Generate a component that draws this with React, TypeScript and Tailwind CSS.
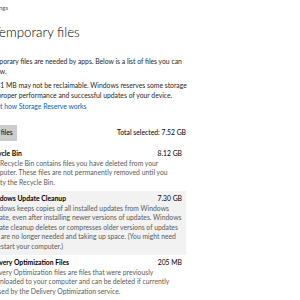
import { Check } from "lucide-react";

type Item = {
  name: string;
  size: string;
  lines: string[];
  checked: boolean;
  hover?: boolean;
};

const items: Item[] = [
  {
    name: "Recycle Bin",
    size: "8.12 GB",
    checked: false,
    lines: [
      "The Recycle Bin contains files you have deleted from your",
      "computer. These files are not permanently removed until you",
      "empty the Recycle Bin.",
    ],
  },
  {
    name: "Windows Update Cleanup",
    size: "7.30 GB",
    checked: true,
    hover: true,
    lines: [
      "Windows keeps copies of all installed updates from Windows",
      "Update, even after installing newer versions of updates. Windows",
      "Update cleanup deletes or compresses older versions of updates",
      "that are no longer needed and taking up space. (You might need",
      "to restart your computer.)",
    ],
  },
  {
    name: "Delivery Optimization Files",
    size: "205 MB",
    checked: true,
    lines: [
      "Delivery Optimization files are files that were previously",
      "downloaded to your computer and can be deleted if currently",
      "unused by the Delivery Optimization service.",
    ],
  },
];

function Lines({ lines }: { lines: string[] }) {
  return (
    <>
      {lines.map((l, i) => (
        <div key={i} className="whitespace-nowrap">
          {l}
        </div>
      ))}
    </>
  );
}

export default function App() {
  return (
    <div className="w-[300px] h-[300px] overflow-hidden bg-white font-['Segoe_UI','Lato',sans-serif] text-[6.8px] leading-[9.5px] text-[#1f1f1f]">
      <div className="-ml-[13px] w-[199px] pt-[4px]">
        {/* header */}
        <div className="text-[6px] leading-[8px] text-[#555]">Settings</div>
        <h1 className="mt-[11px] ml-[6px] text-[13.3px] leading-[18px] font-light text-black">
          Temporary files
        </h1>

        <div className="mt-[16px]">
          <Lines
            lines={[
              "Temporary files are needed by apps. Below is a list of files you can",
              "below.",
            ]}
          />
        </div>
        <div className="mt-[5px]">
          <Lines
            lines={[
              "2,841 MB may not be reclaimable. Windows reserves some storage",
              "for proper performance and successful updates of your device.",
            ]}
          />
        </div>
        <div className="mt-[2px] -ml-[3px] text-[#0063b1] whitespace-nowrap">
          About how Storage Reserve works
        </div>

        {/* actions */}
        <div className="mt-[13px] flex items-center justify-between">
          <button className="-ml-[16px] h-[16px] px-[4px] bg-[#cccccc] text-black">
            Remove files
          </button>
          <span className="text-black">Total selected: 7.52 GB</span>
        </div>

        {/* list */}
        <div className="mt-[5px]">
          {items.map((it) => (
            <div
              key={it.name}
              className={`-ml-[30px] pl-[14px] pr-[4px] py-[3.5px] flex ${
                it.hover ? "bg-[#f2f2f2]" : ""
              }`}
            >
              <div
                className={`mt-[1px] mr-[9px] w-[7px] h-[7px] flex items-center justify-center border ${
                  it.checked
                    ? "bg-[#0063b1] border-[#0063b1]"
                    : "border-[#333] bg-white"
                }`}
              >
                {it.checked && (
                  <Check className="w-[6px] h-[6px] text-white" strokeWidth={3} />
                )}
              </div>
              <div className="flex-1">
                <div className="flex justify-between text-black">
                  <span className="font-bold">{it.name}</span>
                  <span>{it.size}</span>
                </div>
                <div className="text-[#5a5a5a]">
                  <Lines lines={it.lines} />
                </div>
              </div>
            </div>
          ))}
        </div>
      </div>
    </div>
  );
}
